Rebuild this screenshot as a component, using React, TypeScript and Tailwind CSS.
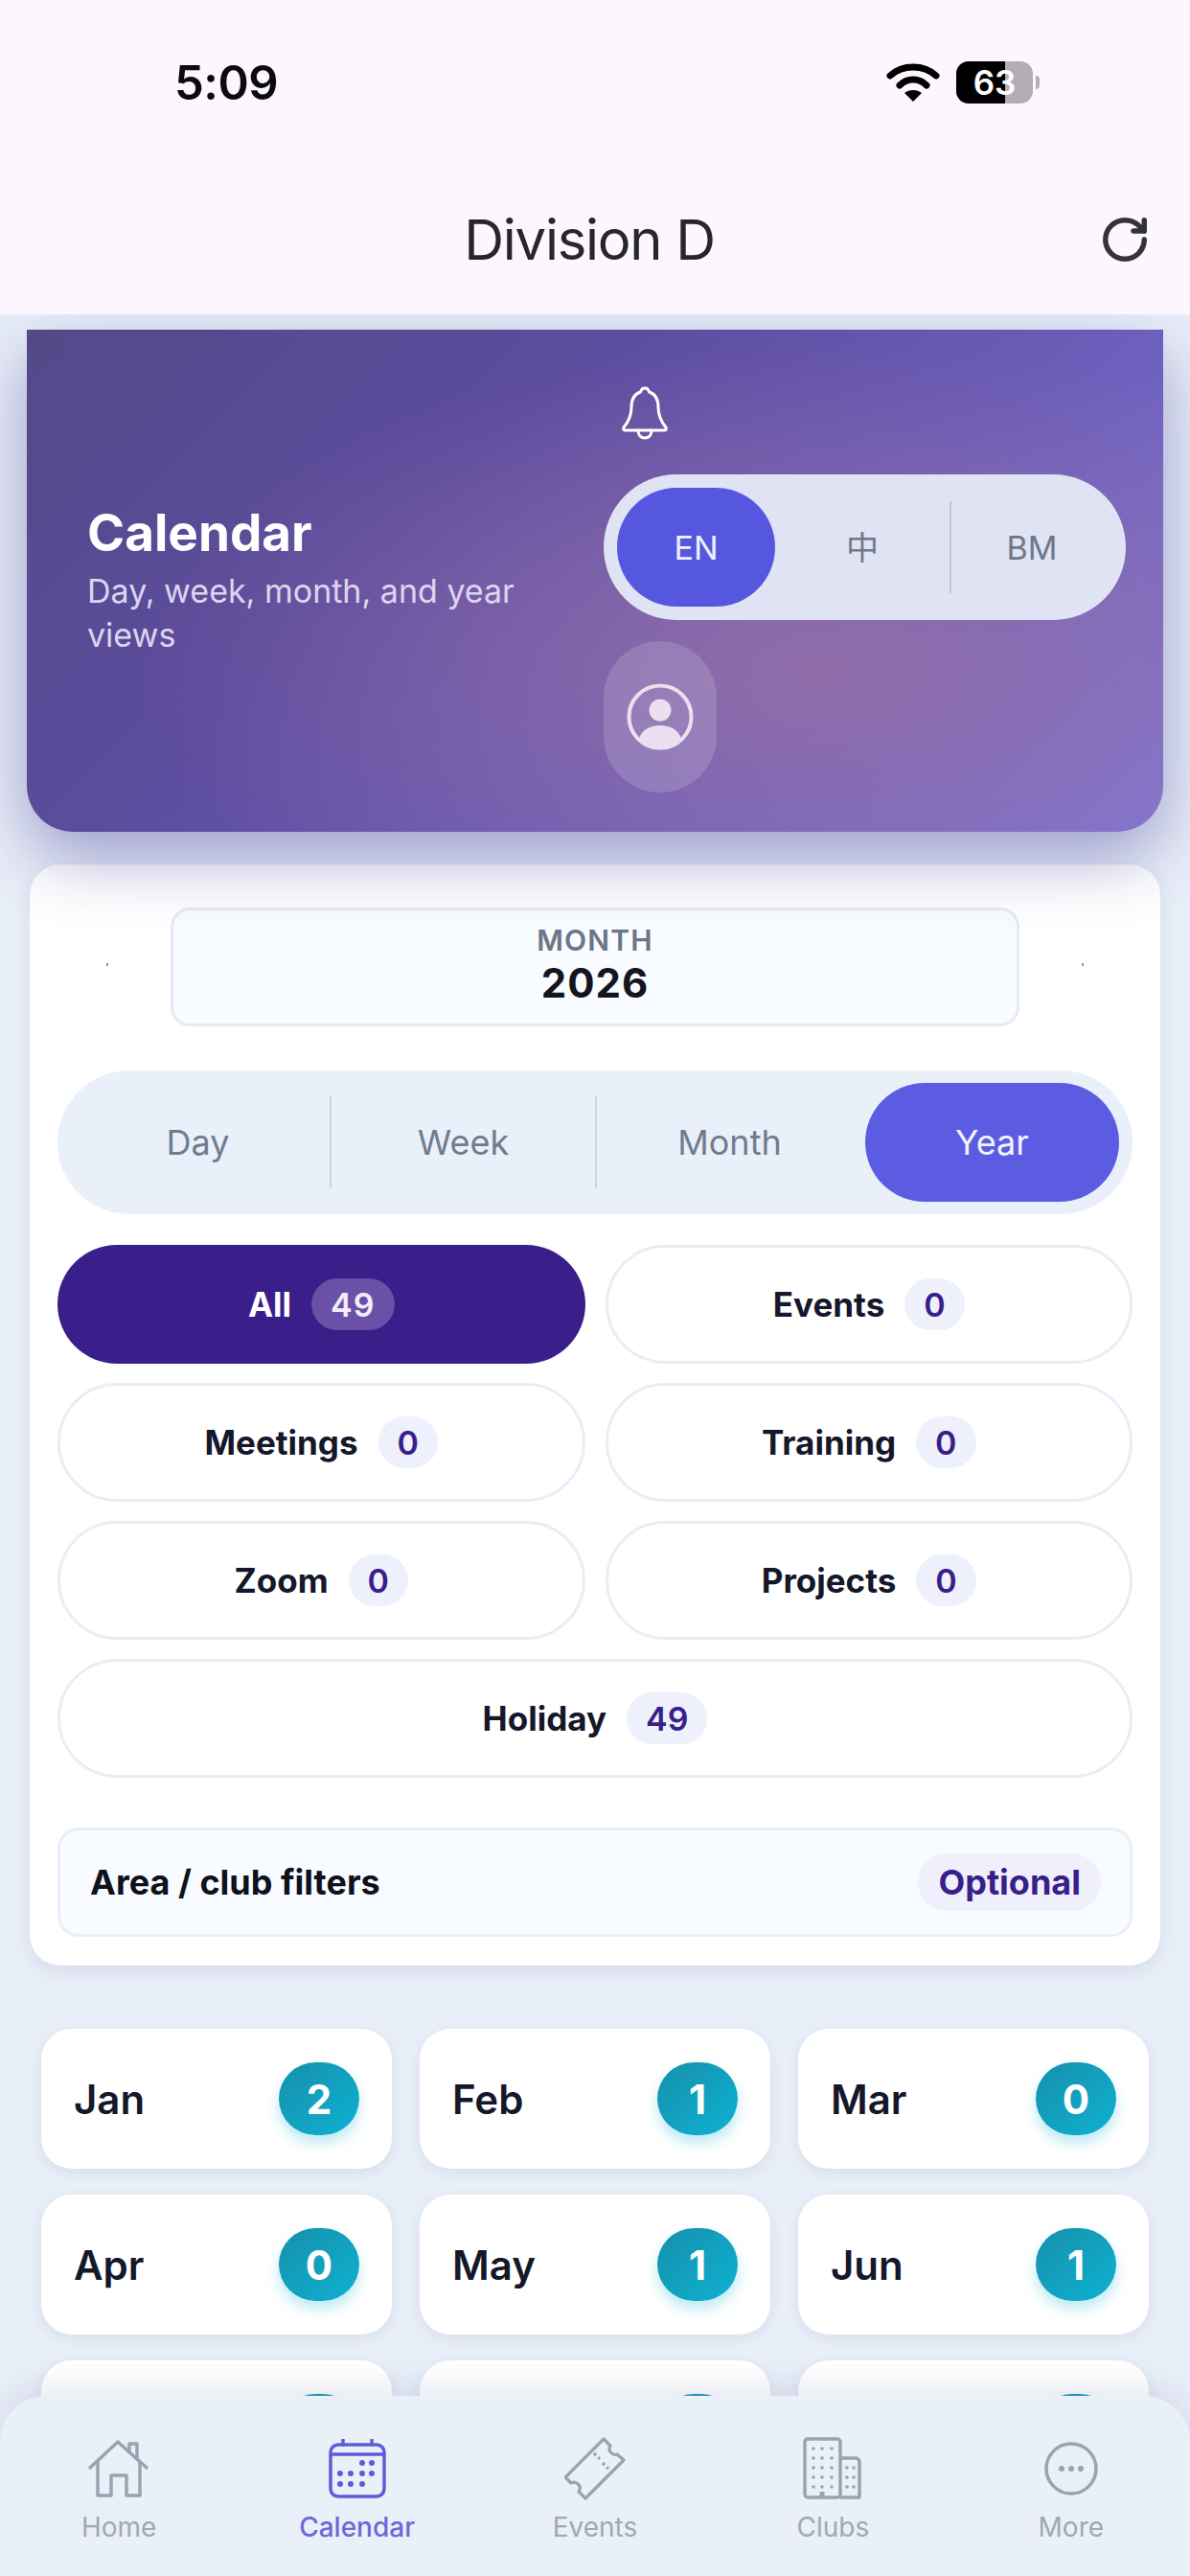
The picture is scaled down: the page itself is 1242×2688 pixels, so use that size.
import { RotateCw } from "lucide-react";

const chips = [
  { label: "All", count: 49, active: true },
  { label: "Events", count: 0 },
  { label: "Meetings", count: 0 },
  { label: "Training", count: 0 },
  { label: "Zoom", count: 0 },
  { label: "Projects", count: 0 },
  { label: "Holiday", count: 49, wide: true },
];

const months = [
  ["Jan", 2],
  ["Feb", 1],
  ["Mar", 0],
  ["Apr", 0],
  ["May", 1],
  ["Jun", 1],
  ["Jul", 3],
  ["Aug", 4],
  ["Sep", 2],
] as const;

function WifiGlyph() {
  return (
    <svg width="56" height="42" viewBox="0 0 56 42" fill="none" stroke="#000" strokeWidth="7" strokeLinecap="round">
      <path d="M4 14 C17 2 39 2 52 14" />
      <path d="M14 24 C22 16 34 16 42 24" />
      <path d="M28 41 L19 32 C24 28 32 28 37 32 Z" fill="#000" stroke="none" />
    </svg>
  );
}

function BatteryGlyph() {
  return (
    <div className="flex items-center gap-[3px]">
      <div className="relative flex h-[44px] w-[80px] items-center justify-center overflow-hidden rounded-[13px] bg-[#b3aeb5]">
        <div className="absolute inset-y-0 left-0 w-[51px] bg-black" />
        <span className="relative text-[35px] leading-none font-semibold text-white">63</span>
      </div>
      <div className="h-[14px] w-[4px] rounded-r-full bg-[#b3aeb5]" />
    </div>
  );
}

function BellIcon() {
  return (
    <svg width="50" height="56" viewBox="0 0 50 56" fill="none" stroke="#fff" strokeWidth="3" strokeLinejoin="round" strokeLinecap="round">
      <path d="M25 2 C28 2 29 4 29.5 6 C36 8 39 14 39 22 C39 31 42 37 47 43 C48 45 47 46 45 46 H5 C3 46 2 45 3 43 C8 37 11 31 11 22 C11 14 14 8 20.5 6 C21 4 22 2 25 2 Z" />
      <path d="M18 46 C18 51 21 54 25 54 C29 54 32 51 32 46" />
    </svg>
  );
}

function AvatarIcon() {
  return (
    <svg width="70" height="70" viewBox="0 0 70 70" fill="none">
      <circle cx="35" cy="35" r="32.5" stroke="#ecdff0" strokeWidth="4" />
      <circle cx="35" cy="28" r="11.5" fill="#ecdff0" />
      <path d="M13 58 C16 48 25 44 35 44 C45 44 54 48 57 58 C51 65 43 68 35 68 C27 68 19 65 13 58 Z" fill="#ecdff0" />
    </svg>
  );
}

function HomeIcon() {
  return (
    <svg width="66" height="62" viewBox="0 0 66 62" fill="none" stroke="#99a3b2" strokeWidth="3.5" strokeLinejoin="round" strokeLinecap="round">
      <path d="M3 30 L32 3 L62 30" />
      <path d="M44 13 V5 H52 V21" />
      <path d="M11 24 V59 H25 V38 H41 V59 H55 V24" />
    </svg>
  );
}

function CalendarIcon() {
  const dots = [
    [35, 25], [45, 25],
    [12, 36], [23, 36], [35, 36], [45, 36],
    [12, 47], [23, 47], [35, 47],
  ];
  return (
    <svg width="60" height="62" viewBox="0 0 60 62" fill="none" stroke="#5d5dd8" strokeWidth="3.5">
      <rect x="2" y="6" width="56" height="54" rx="8" />
      <path d="M2 16 H58" />
      <path d="M15 1 V6 M45 1 V6" strokeLinecap="round" />
      {dots.map(([x, y]) => (
        <circle key={`${x}-${y}`} cx={x} cy={y} r="3" fill="#5d5dd8" stroke="none" />
      ))}
    </svg>
  );
}

function TicketIcon() {
  return (
    <svg width="64" height="66" viewBox="0 0 64 66" fill="none" stroke="#99a3b2" strokeWidth="3.2" strokeLinejoin="round">
      <path d="M41 2 L48 9 C45 14 50 20 55 18 L62 24 L22 64 L15 57 C19 51 12 45 7 48 L1 42 Z" />
      <path d="M31 17 L37 23 M40 27 L46 33" strokeDasharray="3 3" />
    </svg>
  );
}

function BuildingsIcon() {
  const rows = [9, 19, 29, 39, 49];
  return (
    <svg width="62" height="66" viewBox="0 0 62 66" fill="none" stroke="#99a3b2" strokeWidth="3.5" strokeLinejoin="round">
      <rect x="2" y="2" width="37" height="61" rx="3" />
      <path d="M39 22 H55 A4 4 0 0 1 59 26 V63 H39" />
      {rows.map((y) => (
        <g key={y} fill="#99a3b2" stroke="none">
          <circle cx="11" cy={y + 3} r="1.8" />
          <circle cx="20" cy={y + 3} r="1.8" />
          <circle cx="30" cy={y + 3} r="1.8" />
          {y > 20 && <circle cx="46" cy={y + 3} r="1.8" />}
          {y > 20 && <circle cx="53" cy={y + 3} r="1.8" />}
        </g>
      ))}
      <path d="M20 63 V57" strokeWidth="5" />
    </svg>
  );
}

function MoreIcon() {
  return (
    <svg width="56" height="56" viewBox="0 0 56 56" fill="none" stroke="#99a3b2" strokeWidth="3.5">
      <circle cx="28" cy="28" r="26" />
      <g fill="#99a3b2" stroke="none">
        <circle cx="18" cy="28" r="3" />
        <circle cx="28" cy="28" r="3" />
        <circle cx="38" cy="28" r="3" />
      </g>
    </svg>
  );
}

const navItems = [
  { label: "Home", icon: <HomeIcon /> },
  { label: "Calendar", icon: <CalendarIcon />, active: true },
  { label: "Events", icon: <TicketIcon /> },
  { label: "Clubs", icon: <BuildingsIcon /> },
  { label: "More", icon: <MoreIcon /> },
];

export default function App() {
  return (
    <div className="relative flex h-[2688px] w-[1242px] flex-col overflow-hidden bg-[#e9eff8] font-['Inter',sans-serif]">
      {/* Status bar and title */}
      <header className="relative z-20 h-[328px] shrink-0 bg-[#fdf6fe] px-[182px]">
        <div className="flex h-[172px] items-center justify-between">
          <span className="text-[49px] leading-none font-semibold tracking-[-0.5px] text-[#0b0b0e]">5:09</span>
          <div className="mr-[-25px] flex items-center gap-[17px]">
            <WifiGlyph />
            <BatteryGlyph />
          </div>
        </div>
        <div className="relative mt-[36px] flex h-[84px] items-center justify-center pr-[12px]">
          <h1 className="text-[58px] leading-none font-normal tracking-[-1.3px] text-[#26262c]">Division D</h1>
          <RotateCw className="absolute right-[-141px] h-[54px] w-[54px] text-[#33333a]" strokeWidth={2.4} />
        </div>
      </header>

      <main className="min-h-0 flex-1 pt-[16px]">
        {/* Page banner */}
        <section className="relative z-10 mx-[28px] flex h-[524px] items-center rounded-b-[48px] bg-[radial-gradient(ellipse_720px_340px_at_70%_68%,rgba(150,112,166,0.85),rgba(150,112,166,0)),linear-gradient(135deg,#544988_0%,#5c4c9e_35%,#6b5cb8_65%,#7f78da_100%)] pr-[39px] pl-[63px] shadow-[0_26px_70px_rgba(66,58,150,0.46)]">
          <div className="w-[470px] shrink-0">
            <h2 className="text-[53px] leading-[60px] font-bold text-white">Calendar</h2>
            <p className="mt-[8px] text-[34px] leading-[46px] text-[#dcd5ee]">Day, week, month, and year views</p>
          </div>
          <div className="ml-[69px] flex flex-1 flex-col items-start pt-[18px]">
            <div className="ml-[18px]">
              <BellIcon />
            </div>
            <div className="mt-[36px] flex h-[152px] w-full items-center rounded-full bg-[#dfe3f3] px-[14px]">
              <div className="flex h-[124px] w-[165px] items-center justify-center rounded-full bg-[#5558df] text-[34px] text-[#eef0ff]">EN</div>
              <div className="flex h-full flex-1 items-center justify-center font-['Inter','Noto_Sans_CJK_SC',sans-serif] text-[34px] text-[#6f7888]">中</div>
              <div className="h-[96px] w-[2px] bg-[#c3c8d6]" />
              <div className="flex h-full w-[168px] items-center justify-center text-[34px] text-[#6f7888]">BM</div>
            </div>
            <div className="mt-[22px] flex h-[158px] w-[118px] items-center justify-center rounded-full bg-white/15">
              <AvatarIcon />
            </div>
          </div>
        </section>

        {/* Filters */}
        <section className="relative mx-[31px] mt-[34px] rounded-[32px] bg-white px-[29px] pt-[45px] pb-[30px] shadow-[0_6px_18px_rgba(90,100,150,0.14)]">
          <div className="relative flex justify-center">
            <span className="absolute top-[58px] left-[51px] h-[3px] w-[2px] bg-[#8f95a3]" />
            <div className="flex h-[124px] w-[886px] flex-col items-center justify-center rounded-[20px] border-[3px] border-[#e6eaf3] bg-[#f8fbff]">
              <span className="mt-[-4px] text-[30px] leading-[36px] font-semibold tracking-[1.2px] text-[#6b7688]">MONTH</span>
              <span className="mt-[2px] text-[42px] leading-[50px] font-bold tracking-[1px] text-[#14161e]">2026</span>
            </div>
            <span className="absolute top-[58px] right-[51px] h-[3px] w-[2px] bg-[#8f95a3]" />
          </div>

          <div className="mt-[46px] flex h-[150px] items-center rounded-full bg-[#e9f0fa] pr-[14px] pl-[9px]">
            {["Day", "Week", "Month"].map((view) => (
              <div key={view} className={`flex h-[96px] w-[277px] items-center justify-center text-[36px] text-[#707c8e] ${view !== "Month" ? "border-r-2 border-[#cdd4df]" : ""}`}>
                {view}
              </div>
            ))}
            <div className="ml-[3px] flex h-[124px] flex-1 items-center justify-center rounded-full bg-[#5b5ce2] text-[36px] text-[#f3f3ff]">Year</div>
          </div>

          <div className="mt-[32px] grid grid-cols-2 gap-x-[21px] gap-y-[20px]">
            {chips.map((chip) => (
              <div
                key={chip.label}
                className={`flex h-[124px] items-center justify-center gap-[21px] rounded-full ${
                  chip.active ? "bg-[#3a1f8a]" : "border-[3px] border-[#eaedf7] bg-white"
                } ${chip.wide ? "col-span-2" : ""}`}
              >
                <span className={`text-[35px] font-bold ${chip.active ? "text-white" : "text-[#15172a]"}`}>{chip.label}</span>
                <span
                  className={`flex h-[54px] items-center justify-center rounded-full px-[20px] text-[34px] font-semibold ${
                    chip.active ? "bg-[#6a50a6] tracking-[1px] text-[#f1edf8]" : "bg-[#eef0fb] text-[#3a1f8a]"
                  }`}
                >
                  {chip.count}
                </span>
              </div>
            ))}
          </div>

          <div className="mt-[52px] flex h-[114px] items-center justify-between rounded-[22px] border-[3px] border-[#e9edf6] bg-[#f8fbff] pr-[30px] pl-[31px]">
            <span className="text-[36px] font-bold text-[#0f111c]">Area / club filters</span>
            <span className="flex h-[60px] items-center rounded-full bg-[#f0f0fc] px-[21px] text-[36px] font-bold text-[#3a1f8a]">Optional</span>
          </div>
        </section>

        {/* Month totals */}
        <section className="mx-[43px] mt-[66px] grid grid-cols-3 gap-x-[29px] gap-y-[27px]">
          {months.map(([name, total]) => (
            <div key={name} className="flex h-[146px] items-center justify-between rounded-[32px] bg-white pr-[34px] pl-[34px] shadow-[0_4px_14px_rgba(90,100,150,0.12)]">
              <span className="text-[42px] font-semibold text-[#15182a]">{name}</span>
              <span className="flex h-[76px] w-[84px] items-center justify-center rounded-full bg-gradient-to-br from-[#1590ac] to-[#0db1d2] text-[42px] font-bold text-white shadow-[0_8px_14px_rgba(13,177,210,0.28)]">
                {total}
              </span>
            </div>
          ))}
        </section>
      </main>

      {/* Tab bar */}
      <nav className="absolute inset-x-0 bottom-0 z-20 grid h-[188px] grid-cols-5 rounded-t-[48px] bg-[#eaf0f8] shadow-[0_-10px_30px_rgba(90,100,150,0.14)]">
        {navItems.map((item) => (
          <div key={item.label} className="flex flex-col items-center pt-[42px]">
            <div className="flex h-[68px] items-center justify-center">{item.icon}</div>
            <span className={`mt-[10px] text-[28px] leading-[34px] ${item.active ? "font-medium text-[#6a68dc]" : "text-[#9fa8b6]"}`}>{item.label}</span>
          </div>
        ))}
      </nav>
    </div>
  );
}
